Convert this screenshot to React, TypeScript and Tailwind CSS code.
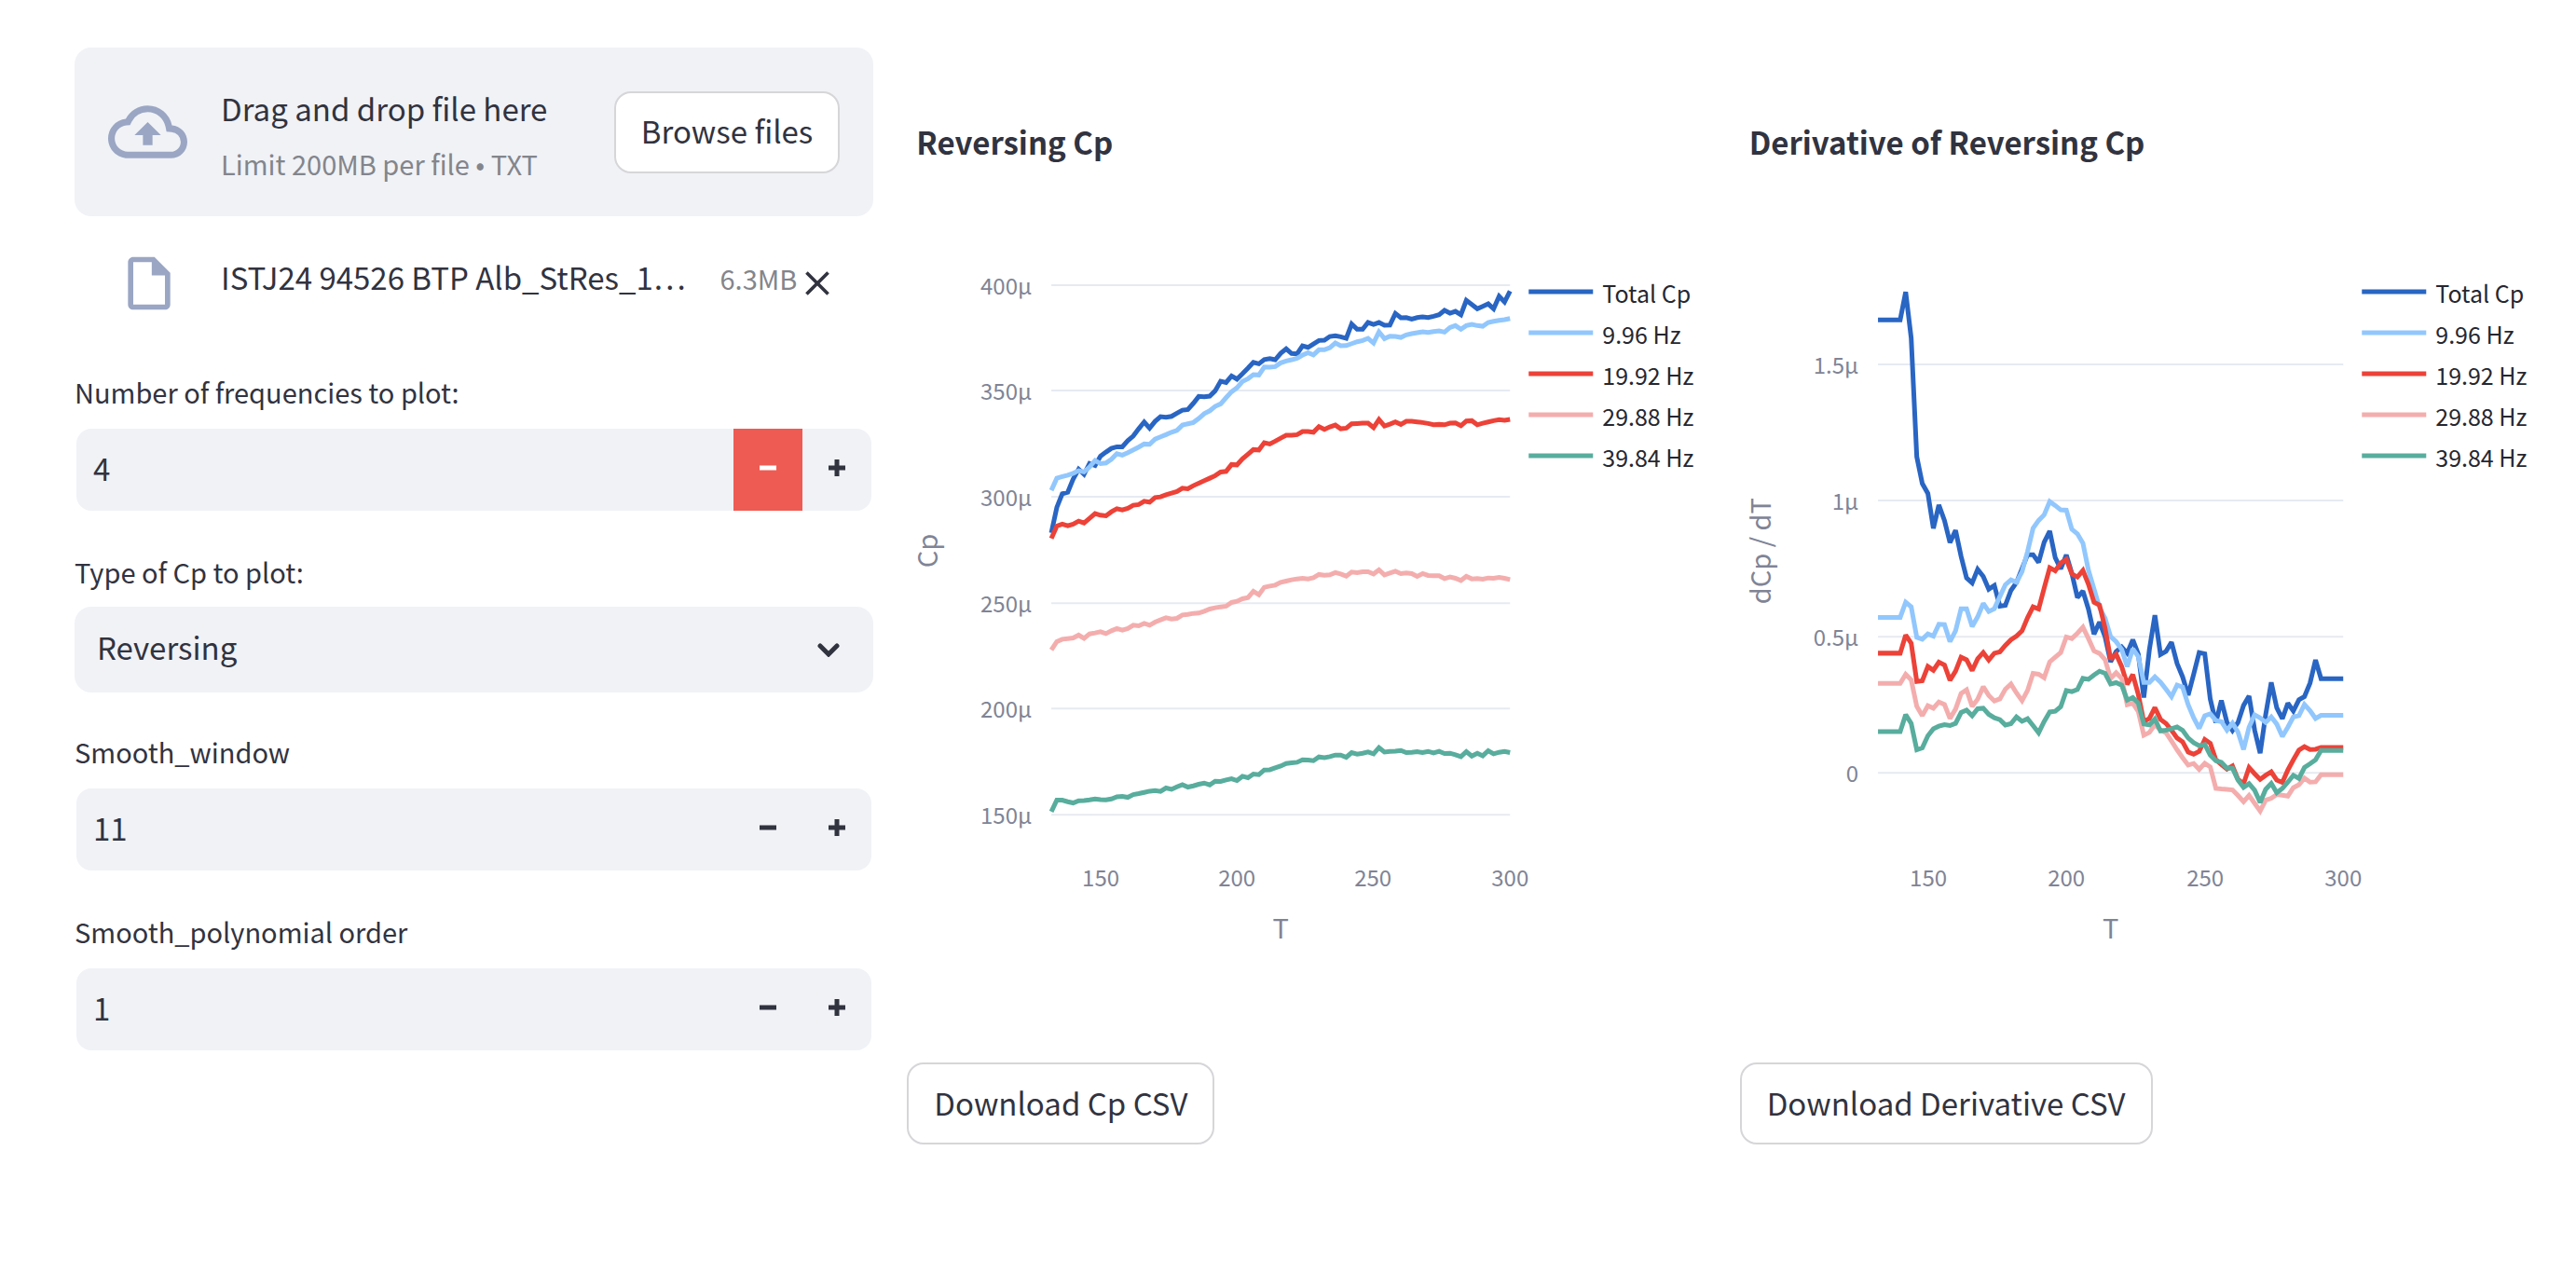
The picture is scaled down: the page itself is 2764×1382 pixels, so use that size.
import { useState } from "react";
import { MdClose, MdOutlineCloudUpload, MdOutlineInsertDriveFile } from "react-icons/md";

type Part = { base: number; values: number[] };
type Series = { name: string; color: string; parts: Part[] };
type Tick = { label: string; at: number };
type ChartSpec = {
  title: string;
  yTitle: string;
  left: number;
  right: number;
  xTicks: Tick[];
  yTicks: Tick[];
  series: Series[];
};

const NAMES = ["Total Cp", "9.96 Hz", "19.92 Hz", "29.88 Hz", "39.84 Hz"];
const COLORS = ["#2965c3", "#91c7fd", "#ec4238", "#f4adad", "#58ad9d"];

// One sample every 2 degrees from 132 to 300; heights are in thirds of a chart unit below the base.
const cpSeries: Series[] = [
  {
    name: NAMES[0],
    color: COLORS[0],
    parts: [{ base: 50, values: [845, 763, 719, 714, 672, 640, 656, 622, 628, 598, 585, 573, 568, 568, 548, 533, 510, 488, 508, 486, 471, 473, 470, 460, 450, 448, 428, 406, 407, 405, 388, 357, 361, 340, 350, 333, 315, 296, 301, 287, 284, 288, 267, 253, 268, 269, 243, 248, 237, 226, 225, 213, 211, 214, 219, 173, 190, 190, 168, 174, 168, 177, 176, 139, 153, 152, 157, 152, 150, 152, 148, 143, 129, 138, 132, 143, 97, 110, 124, 116, 108, 124, 84, 102, 67] }],
  },
  {
    name: NAMES[1],
    color: COLORS[1],
    parts: [{ base: 50, values: [708, 669, 664, 659, 653, 645, 649, 633, 612, 622, 620, 608, 590, 595, 587, 578, 569, 559, 560, 543, 536, 529, 521, 515, 498, 494, 490, 477, 461, 452, 438, 430, 410, 391, 378, 358, 349, 336, 337, 311, 312, 310, 298, 292, 288, 283, 273, 265, 272, 256, 256, 249, 234, 243, 242, 236, 230, 226, 219, 234, 198, 220, 212, 213, 216, 208, 204, 201, 198, 200, 197, 195, 199, 184, 178, 190, 178, 174, 178, 180, 168, 164, 161, 159, 155] }],
  },
  {
    name: NAMES[2],
    color: COLORS[2],
    parts: [{ base: 50, values: [863, 823, 817, 822, 817, 807, 813, 798, 783, 788, 790, 777, 767, 771, 766, 756, 754, 743, 746, 731, 729, 722, 717, 712, 701, 703, 693, 685, 677, 669, 661, 649, 647, 625, 626, 607, 592, 577, 578, 555, 559, 550, 540, 531, 531, 529, 519, 519, 521, 503, 512, 504, 498, 510, 508, 494, 493, 492, 492, 506, 480, 501, 495, 488, 496, 486, 486, 488, 490, 493, 497, 496, 497, 492, 491, 500, 485, 484, 497, 492, 488, 484, 481, 483, 480] }],
  },
  {
    name: NAMES[3],
    color: COLORS[3],
    parts: [{ base: 340, values: [352, 325, 317, 315, 313, 304, 314, 300, 297, 293, 299, 290, 283, 288, 283, 272, 274, 266, 272, 262, 255, 248, 252, 250, 239, 237, 234, 233, 227, 220, 216, 213, 211, 199, 195, 187, 183, 163, 174, 150, 146, 143, 134, 130, 126, 123, 121, 123, 119, 109, 111, 110, 103, 107, 114, 101, 103, 100, 100, 107, 94, 110, 104, 98, 106, 104, 106, 115, 106, 112, 113, 113, 122, 117, 121, 128, 115, 123, 122, 124, 120, 121, 118, 121, 125] }],
  },
  {
    name: NAMES[4],
    color: COLORS[4],
    parts: [{ base: 340, values: [872, 835, 835, 840, 844, 837, 836, 834, 831, 833, 834, 831, 824, 823, 826, 817, 814, 810, 806, 804, 807, 796, 800, 792, 785, 793, 789, 784, 780, 786, 774, 775, 770, 766, 772, 758, 763, 751, 753, 738, 737, 731, 725, 717, 715, 713, 705, 706, 708, 696, 698, 695, 690, 690, 697, 682, 687, 684, 680, 686, 666, 680, 678, 677, 675, 682, 681, 679, 682, 678, 683, 678, 685, 684, 689, 695, 679, 693, 684, 692, 676, 686, 681, 678, 682] }],
  },
];

const derivativeSeries: Series[] = [
  {
    name: NAMES[0],
    color: COLORS[0],
    parts: [
      { base: 280, values: [-530, -530, -530, -530, -530, -620, -472, -90, -4, 28, 140, 65, 115, 186, 147, 230, 300, 316, 272, 295, 336, 324, 391, 388, 340, 315, 270, 225, 225, 250, 185, 149, 235, 271, 226, 285, 363, 342, 400, 481, 442, 490] },
      { base: 380, values: [270, 237, 222, 242, 199, 245, 385, 230, 120, 246, 236, 207, 275, 318, 377, 310, 240, 244, 390, 466, 394, 465, 491, 465, 410, 380, 490, 564, 440, 336, 418, 453, 403, 428, 392, 382, 338, 264, 324, 324, 324, 324, 324] },
    ],
  },
  {
    name: NAMES[1],
    color: COLORS[1],
    parts: [
      { base: 280, values: [427, 427, 427, 427, 427, 378, 393, 491, 497, 480, 487, 449, 450, 505, 470, 399, 399, 456, 425, 382, 408, 399, 360, 322, 306, 314, 280, 215, 140, 115, 97, 54, 67, 81, 82, 143, 158, 188, 275, 335, 395, 430] },
      { base: 380, values: [189, 205, 230, 285, 228, 253, 336, 336, 318, 335, 358, 382, 345, 351, 408, 450, 484, 443, 437, 459, 462, 490, 467, 496, 552, 480, 440, 450, 465, 447, 470, 510, 480, 447, 443, 407, 427, 452, 442, 442, 442, 442, 442] },
    ],
  },
  {
    name: NAMES[2],
    color: COLORS[2],
    parts: [
      { base: 280, values: [542, 542, 542, 542, 542, 484, 510, 633, 631, 585, 597, 571, 580, 629, 600, 555, 563, 598, 560, 540, 564, 542, 538, 517, 499, 487, 470, 428, 393, 400, 333, 267, 277, 252, 240, 287, 297, 276, 320, 378, 387, 462] },
      { base: 380, values: [261, 245, 285, 342, 311, 375, 462, 452, 417, 455, 468, 490, 515, 527, 560, 567, 558, 520, 532, 585, 600, 615, 605, 648, 662, 610, 630, 648, 635, 624, 650, 658, 618, 585, 554, 543, 552, 551, 545, 545, 545, 545, 545] },
    ],
  },
  {
    name: NAMES[3],
    color: COLORS[3],
    parts: [
      { base: 280, values: [639, 639, 639, 639, 639, 610, 628, 713, 743, 711, 719, 699, 707, 752, 722, 672, 660, 713, 690, 650, 678, 696, 689, 658, 641, 670, 695, 662, 607, 610, 621, 570, 555, 540, 490, 495, 478, 458, 495, 535, 543, 563] },
      { base: 380, values: [323, 305, 323, 408, 403, 430, 506, 497, 472, 490, 498, 525, 553, 578, 602, 597, 616, 596, 608, 677, 679, 680, 682, 700, 720, 700, 725, 750, 715, 709, 697, 699, 702, 675, 665, 644, 657, 656, 633, 633, 633, 633, 633] },
    ],
  },
  {
    name: NAMES[4],
    color: COLORS[4],
    parts: [
      { base: 280, values: [794, 794, 794, 794, 794, 740, 768, 853, 847, 808, 785, 777, 772, 775, 768, 733, 725, 743, 721, 719, 739, 750, 756, 773, 769, 747, 761, 753, 775, 798, 762, 731, 729, 714, 662, 666, 659, 623, 626, 612, 600, 607] },
      { base: 380, values: [341, 337, 345, 393, 385, 403, 470, 473, 454, 492, 490, 485, 479, 490, 515, 530, 540, 536, 570, 588, 593, 612, 612, 650, 674, 662, 683, 722, 680, 661, 691, 677, 657, 635, 645, 610, 598, 585, 555, 555, 555, 555, 555] },
    ],
  },
];

const CP_CHART: ChartSpec = {
  title: "Reversing Cp",
  yTitle: "Cp",
  left: 155,
  right: 647,
  xTicks: [
    { label: "150", at: 208 },
    { label: "200", at: 354 },
    { label: "250", at: 500 },
    { label: "300", at: 647 },
  ],
  yTicks: [
    { label: "400µ", at: 66 },
    { label: "350µ", at: 179 },
    { label: "300µ", at: 293 },
    { label: "250µ", at: 407 },
    { label: "200µ", at: 520 },
    { label: "150µ", at: 634 },
  ],
  series: cpSeries,
};

const DERIVATIVE_CHART: ChartSpec = {
  title: "Derivative of Reversing Cp",
  yTitle: "dCp / dT",
  left: 148,
  right: 647,
  xTicks: [
    { label: "150", at: 202 },
    { label: "200", at: 350 },
    { label: "250", at: 499 },
    { label: "300", at: 647 },
  ],
  yTicks: [
    { label: "1.5µ", at: 151 },
    { label: "1µ", at: 297 },
    { label: "0.5µ", at: 443 },
    { label: "0", at: 589 },
  ],
  series: derivativeSeries,
};

function linePoints(series: Series, left: number, right: number) {
  const heights = series.parts.flatMap((part) => part.values.map((v) => part.base + v / 3));
  const step = (right - left) / (heights.length - 1);
  return heights.map((y, i) => `${(left + i * step).toFixed(1)},${y.toFixed(1)}`).join(" ");
}

function Chart({ spec }: { spec: ChartSpec }) {
  const { left, right } = spec;
  const middle = (left + right) / 2;
  return (
    <svg viewBox="0 0 857 864" className="mt-16 block w-full" role="img" aria-label={spec.title}>
      {spec.yTicks.map((tick) => (
        <g key={tick.label}>
          <line x1={left} x2={right} y1={tick.at} y2={tick.at} stroke="#e6eaf1" strokeWidth="2" />
          <text x={left - 21} y={tick.at + 10} textAnchor="end" className="fill-[#808495] text-[24px]">
            {tick.label}
          </text>
        </g>
      ))}
      {spec.xTicks.map((tick) => (
        <text key={tick.label} x={tick.at} y="711" textAnchor="middle" className="fill-[#808495] text-[24px]">
          {tick.label}
        </text>
      ))}
      <text x={middle} y="767" textAnchor="middle" className="fill-[#808495] text-[29px]">
        T
      </text>
      <text transform="translate(33 351) rotate(-90)" textAnchor="middle" className="fill-[#808495] text-[29px]">
        {spec.yTitle}
      </text>
      {spec.series.map((series) => (
        <polyline
          key={series.name}
          points={linePoints(series, left, right)}
          fill="none"
          stroke={series.color}
          strokeWidth="5"
          strokeMiterlimit="2"
        />
      ))}
      {spec.series.map((series, i) => (
        <g key={series.name}>
          <line x1="667" x2="736" y1={73 + i * 44} y2={73 + i * 44} stroke={series.color} strokeWidth="5" />
          <text x="746" y={85 + i * 44} className="fill-[#262730] text-[25px]">
            {series.name}
          </text>
        </g>
      ))}
    </svg>
  );
}

function ChartPanel({ spec, action }: { spec: ChartSpec; action: string }) {
  return (
    <section className="pt-[77px]">
      <h2 className="pl-[10px] text-[33px] leading-[48px] font-bold">{spec.title}</h2>
      <Chart spec={spec} />
      <button
        type="button"
        className="mt-9 h-[88px] rounded-[18px] border-2 border-[#d6d6d9] bg-white px-[27px] pb-0.5 text-[33px] whitespace-nowrap"
      >
        {action}
      </button>
    </section>
  );
}

function StepIcon({ plus }: { plus?: boolean }) {
  return (
    <svg viewBox="0 0 18 18" className="mb-1 size-[18px]" fill="none" stroke="currentColor" strokeWidth="5" aria-hidden="true">
      <path d={plus ? "M0 9H18M9 0V18" : "M0 9H18"} />
    </svg>
  );
}

function NumberField({ id, label, initial, activeMinus }: { id: string; label: string; initial: number; activeMinus?: boolean }) {
  const [value, setValue] = useState(String(initial));
  const change = (by: number) => setValue(String((Number(value) || 0) + by));
  return (
    <div className="flex flex-col gap-[14px]">
      <label htmlFor={id} className="text-[29px] leading-[48px]">
        {label}
      </label>
      <div className="flex h-[92px] overflow-hidden rounded-[18px] border-2 border-white bg-[#f0f2f6]">
        <input
          id={id}
          type="text"
          inputMode="numeric"
          value={value}
          onChange={(e) => setValue(e.target.value)}
          className="min-w-0 flex-1 bg-transparent pb-0.5 pl-[18px] text-[33px] outline-none"
        />
        <button
          type="button"
          aria-label={`Decrease ${label}`}
          onClick={() => change(-1)}
          className={
            activeMinus
              ? "flex w-[74px] items-center justify-center bg-[#ee5b53] text-white"
              : "flex w-[74px] items-center justify-center"
          }
        >
          <StepIcon />
        </button>
        <button
          type="button"
          aria-label={`Increase ${label}`}
          onClick={() => change(1)}
          className="flex w-[74px] items-center justify-center"
        >
          <StepIcon plus />
        </button>
      </div>
    </div>
  );
}

export default function App() {
  return (
    <main className="grid min-h-screen grid-cols-3 items-start gap-9 bg-white pt-[51px] pr-10 pb-16 pl-20 font-['Noto_Sans_CJK_KR',sans-serif] text-[#31333f]">
      <section className="min-w-0">
        <div className="flex items-center gap-9 rounded-[18px] bg-[#f0f2f6] px-9 py-[35px]">
          <MdOutlineCloudUpload className="size-[85px] shrink-0 text-[#9aa6c3]" aria-hidden="true" />
          <div className="flex min-w-0 flex-1 flex-col gap-2">
            <span className="text-[33px] leading-[60px]">Drag and drop file here</span>
            <span className="text-[29px] leading-[43px] text-[#83858c]">Limit 200MB per file • TXT</span>
          </div>
          <button
            type="button"
            className="h-[88px] rounded-[18px] border-2 border-[#d6d6d9] bg-white px-[27px] pb-0.5 text-[33px] whitespace-nowrap"
          >
            Browse files
          </button>
        </div>

        <div className="mt-[38px] flex items-start pr-[38px] pl-[46px]">
          <MdOutlineInsertDriveFile className="size-[68px] shrink-0 text-[#9aa6c3]" aria-hidden="true" />
          <div className="ml-[43px] flex min-w-0 flex-1 items-baseline justify-between">
            <span className="text-[33px] leading-[54px] whitespace-nowrap">ISTJ24 94526 BTP Alb_StRes_1…</span>
            <span className="text-[29px] text-[#83858c]">6.3MB</span>
          </div>
          <button type="button" aria-label="Remove file" className="self-center">
            <MdClose className="size-[44px]" />
          </button>
        </div>

        <div className="mt-[58px] flex flex-col gap-[39px]">
          <NumberField id="frequencies" label="Number of frequencies to plot:" initial={4} activeMinus />
          <div className="flex flex-col gap-[14px]">
            <label htmlFor="cp-type" className="text-[29px] leading-[48px]">
              Type of Cp to plot:
            </label>
            <div className="relative">
              <select
                id="cp-type"
                defaultValue="Reversing"
                className="block h-[92px] w-full appearance-none rounded-[18px] bg-[#f0f2f6] px-6 pb-1 text-[33px] outline-none"
              >
                <option>Reversing</option>
                <option>Non-reversing</option>
              </select>
              <svg
                viewBox="0 0 24 16"
                className="pointer-events-none absolute top-[38px] right-9 h-4 w-6"
                fill="none"
                stroke="currentColor"
                strokeWidth="5"
                strokeLinecap="round"
                aria-hidden="true"
              >
                <path d="M3 4L12 13L21 4" />
              </svg>
            </div>
          </div>
          <NumberField id="smooth-window" label="Smooth_window" initial={11} />
          <NumberField id="smooth-order" label="Smooth_polynomial order" initial={1} />
        </div>
      </section>

      <ChartPanel spec={CP_CHART} action="Download Cp CSV" />
      <ChartPanel spec={DERIVATIVE_CHART} action="Download Derivative CSV" />
    </main>
  );
}
